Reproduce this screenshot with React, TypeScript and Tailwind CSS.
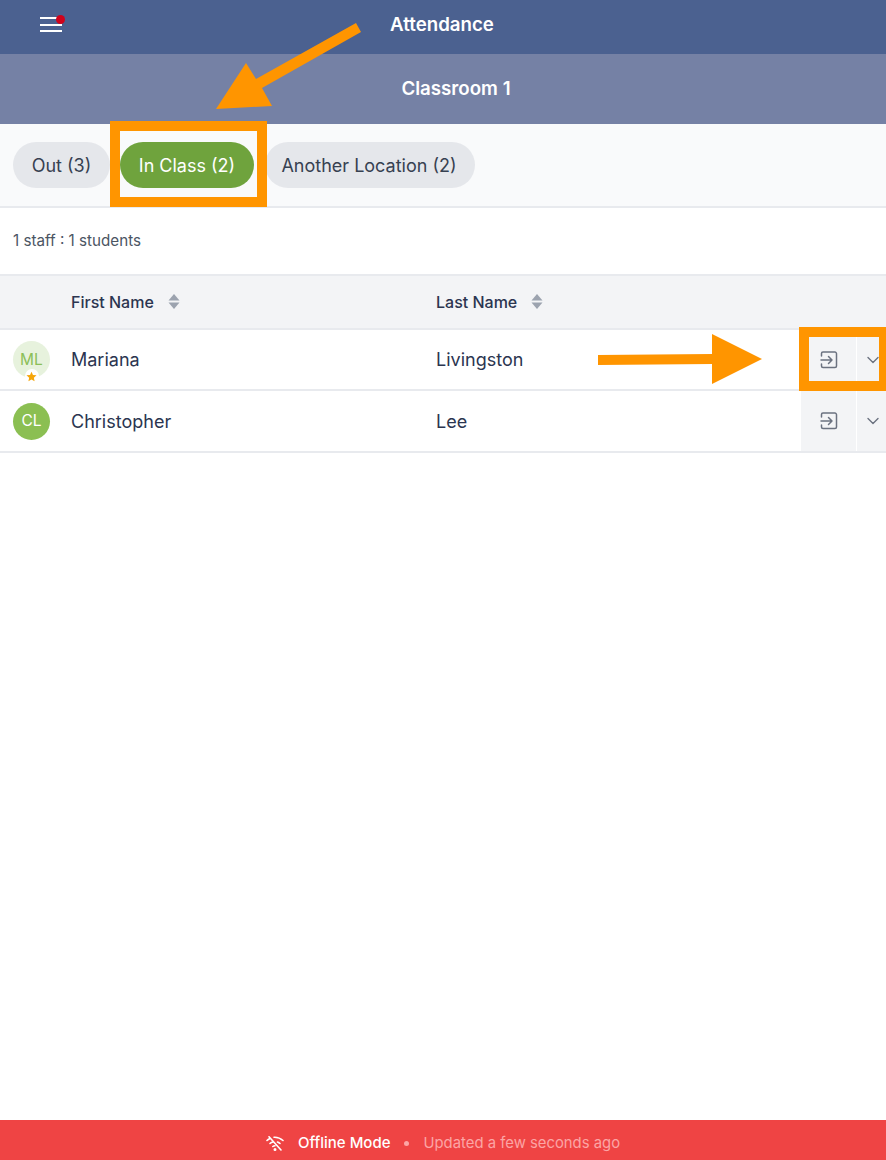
import React from "react";

function Sort() {
  return (
    <svg width="12" height="15" viewBox="0 0 12 15" className="ml-[14px] fill-[#9ca3af]">
      <path d="M6 0 L11.5 6.5 H0.5 Z" />
      <path d="M6 15 L11.5 8.5 H0.5 Z" />
    </svg>
  );
}

function LoginIcon() {
  return (
    <svg width="18" height="18" viewBox="0 0 18 18" fill="none" stroke="#6b7280" strokeWidth="1.5" strokeLinecap="round" strokeLinejoin="round">
      <path d="M1.5 5 V2.5 a1.5 1.5 0 0 1 1.5 -1.5 H15 a1.8 1.8 0 0 1 1.5 1.5 V15 a1.5 1.5 0 0 1 -1.5 1.5 H3 a1.5 1.5 0 0 1 -1.5 -1.5 V13" />
      <path d="M1 9 H12 M8.5 5.5 L12 9 L8.5 12.5" />
    </svg>
  );
}

function Chevron() {
  return (
    <svg width="12" height="8" viewBox="0 0 12 8" fill="none" stroke="#6b7280" strokeWidth="1.4" strokeLinecap="round" strokeLinejoin="round">
      <path d="M1 1.5 L6 6.5 L11 1.5" />
    </svg>
  );
}

function Row({ first, last, initials, light, heightClass }: { first: string; last: string; initials: string; light?: boolean; heightClass: string }) {
  return (
    <div className={"flex items-stretch border-b-2 border-[#e8eaee] " + heightClass}>
      <div className="flex w-[71px] items-center pl-[13px]">
        <div className={"relative flex h-[37px] w-[37px] items-center justify-center rounded-full text-[15.5px] " + (light ? "bg-[#e7f2dd] text-[#8bbf58]" : "bg-[#8bbf52] text-white")}>
          {initials}
          {light && (
            <span className="absolute bottom-[-5px] left-1/2 flex h-[14px] w-[14px] -translate-x-1/2 items-center justify-center rounded-full bg-white">
              <svg width="11" height="11" viewBox="0 0 24 24" className="fill-[#f5a60b]">
                <path d="M12 1.5 L15.2 8.6 L23 9.4 L17.1 14.6 L18.8 22.3 L12 18.3 L5.2 22.3 L6.9 14.6 L1 9.4 L8.8 8.6 Z" />
              </svg>
            </span>
          )}
        </div>
      </div>
      <div className="flex w-[365px] items-center text-[18px] text-[#2b3550]">{first}</div>
      <div className="flex flex-1 items-center text-[18px] text-[#2b3550]">{last}</div>
      <div className="flex w-[55px] items-center justify-center bg-[#f3f4f6] pl-[1px]">
        <LoginIcon />
      </div>
      <div className="flex w-[30px] items-center justify-center border-l border-white bg-[#f3f4f6] pl-[2px]">
        <Chevron />
      </div>
    </div>
  );
}

export default function App() {
  return (
    <div className="relative flex h-[1160px] w-[886px] flex-col overflow-hidden bg-white font-['Inter',sans-serif]">
      <header className="relative flex h-[54px] shrink-0 items-center justify-center bg-[#4b6190] pb-[3px] pr-[2px] text-[18.7px] font-semibold text-white">
        Attendance
        <div className="absolute left-[40px] top-[17px] flex w-[22px] flex-col gap-[4.5px]">
          <div className="h-[2px] bg-white" />
          <div className="h-[2px] bg-white" />
          <div className="h-[2px] bg-white" />
          <div className="absolute right-[-3px] top-[-2px] h-[9px] w-[9px] rounded-full bg-[#d0021b]" />
        </div>
      </header>
      <div className="flex h-[70px] shrink-0 items-center justify-center bg-[#7581a5] pl-[26px] pt-[1px] text-[18.7px] font-semibold text-white">
        Classroom 1
      </div>
      <div className="flex h-[84px] shrink-0 items-center gap-[10px] border-b-2 border-[#e8eaee] bg-[#f9fafb] pl-[13px] text-[18px] text-[#374151]">
        <div className="flex h-[46px] w-[97px] items-center justify-center rounded-full bg-[#e5e7eb]">Out (3)</div>
        <div className="flex h-[46px] w-[134px] items-center justify-center rounded-full bg-[#6fa33d] text-white">In Class (2)</div>
        <div className="ml-[1px] flex h-[46px] w-[210px] items-center justify-center rounded-full bg-[#e5e7eb] pr-[2px]">Another Location (2)</div>
      </div>
      <div className="flex h-[66px] shrink-0 items-center pl-[13px] pt-[1px] text-[15.2px] text-[#4b5563]">1 staff : 1 students</div>
      <div className="flex h-[56px] shrink-0 items-center border-y-2 border-[#e8eaee] bg-[#f3f4f6] pb-[1px] text-[16px] font-medium text-[#2b3550]">
        <div className="flex w-[436px] items-center pl-[71px]">First Name<Sort /></div>
        <div className="flex items-center">Last Name<Sort /></div>
      </div>
      <Row first="Mariana" last="Livingston" initials="ML" light heightClass="h-[61px]" />
      <Row first="Christopher" last="Lee" initials="CL" heightClass="h-[62px]" />
      <div className="flex-1" />
      <footer className="flex h-[40px] shrink-0 items-center justify-center bg-[#ef4444] pt-[6px] text-[15px] font-medium text-white">
        <svg width="18" height="15" viewBox="0 0 18 15" fill="none" stroke="#ffffff" strokeWidth="1.6" strokeLinecap="round" className="mr-[14px]">
          <path d="M1 4.5 C2 3.5 3 3 4 2.5" />
          <path d="M8 1.2 C11.5 1 14.5 2.2 17 4.5" />
          <path d="M4 7.5 C5 6.6 6 6.2 7 6" />
          <path d="M11.5 6 C12.5 6.4 13.5 7 14 7.5" />
          <path d="M6.8 10.5 C7.4 10 8 9.8 9 9.8" />
          <path d="M3 0.8 L15 14" />
          <circle cx="9" cy="13.4" r="0.7" />
        </svg>
        Offline Mode
        <span className="mx-[14px] h-[5px] w-[5px] rounded-full bg-[#fca5a5]" />
        <span className="text-[14.85px] font-normal text-[#fca5a5]">Updated a few seconds ago</span>
      </footer>

      {/* annotations */}
      <div className="absolute left-[110px] top-[121px] h-[86px] w-[157px] border-[10px] border-[#ff9500]" />
      <div className="absolute left-[799px] top-[327px] h-[64px] w-[87px] border-[10px] border-r-[7px] border-[#ff9500]" />
      <svg className="absolute left-0 top-0" width="886" height="400" fill="#ff9500">
        <path d="M356 23 L361 32 L262 88 L272 106 L216 109 L246 63 L256 79 Z" />
        <path d="M598 355 L712 354 V334 L762 359 L712 384 V364 L598 365 Z" />
      </svg>
    </div>
  );
}
